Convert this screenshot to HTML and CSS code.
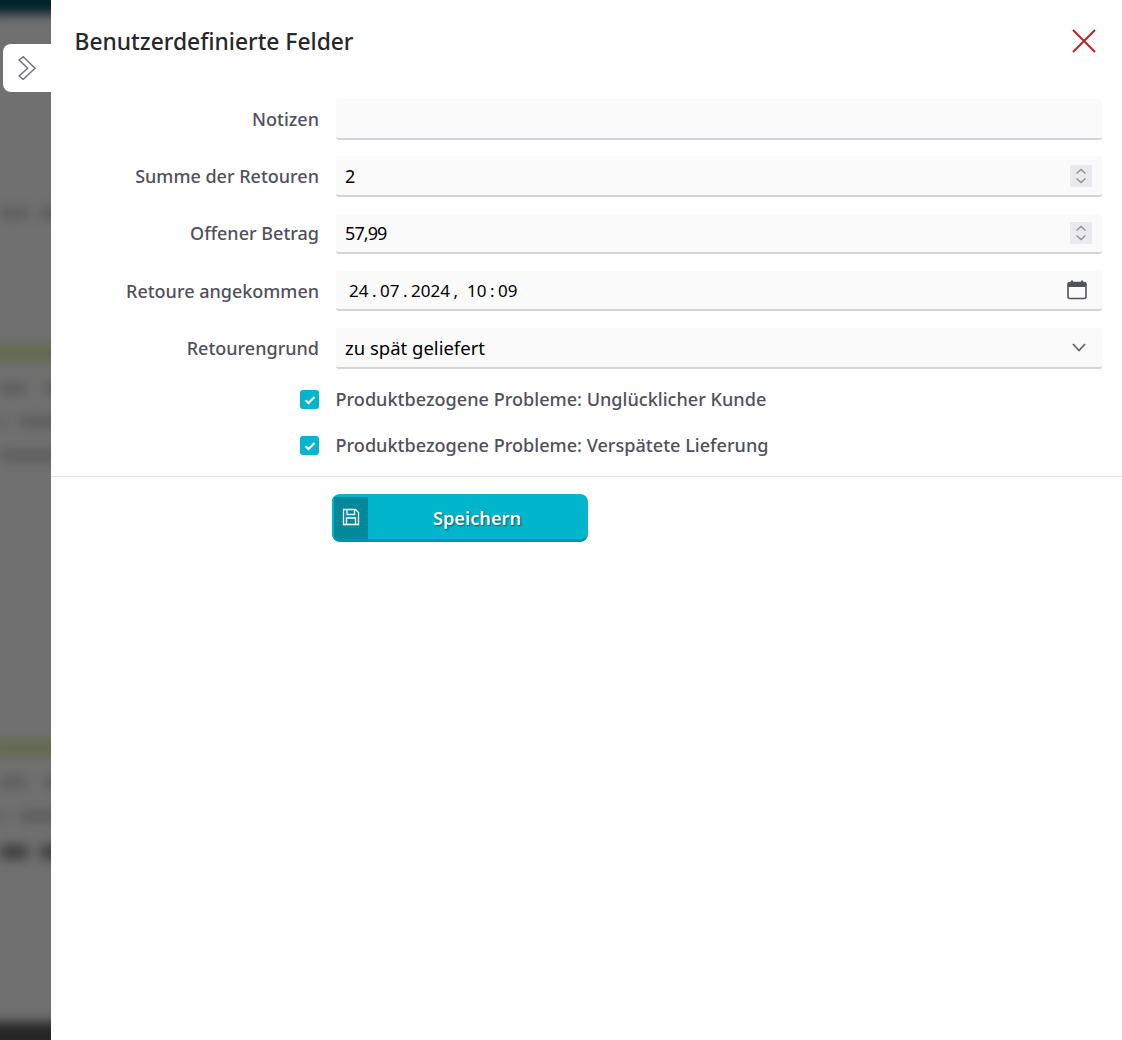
FILE: index.html
```html
<!DOCTYPE html>
<html lang="de">
<head>
<meta charset="utf-8">
<title>Benutzerdefinierte Felder</title>
<link rel="stylesheet" href="styles.css">
</head>
<body>
<div class="page">
  <div class="backdrop" aria-hidden="true">
    <div class="blur">
      <div class="bar-top"></div>
      <div class="line l213"><i class="w28"></i><i class="w30"></i></div>
      <div class="green g352"></div>
      <div class="line l388"><i class="w28"></i><i class="w30"></i></div>
      <div class="line l421"><i class="w6"></i><i class="w50"></i></div>
      <div class="line l455"><i class="w60"></i></div>
      <div class="green g748"></div>
      <div class="line l782"><i class="w28"></i><i class="w30"></i></div>
      <div class="line l815"><i class="w6"></i><i class="w50"></i></div>
      <div class="line l850 dark"><i class="w28"></i><i class="w30"></i></div>
      <div class="spacer"></div>
      <div class="bar-bottom"></div>
    </div>
  </div>
  <button class="tab" type="button" aria-label="Einklappen">
    <svg width="18" height="24" viewBox="0 0 18 24"><path d="M1 4 5.300 0.800 17 12.300 5.300 23.300 1 20 9.700 12.300Z" fill="none" stroke="#71717f" stroke-width="1.500" stroke-linejoin="round"/></svg>
  </button>
  <main class="panel">
    <header class="head">
      <h1>Benutzerdefinierte Felder</h1>
      <button class="close" type="button" aria-label="Schließen">
        <svg width="24" height="24" viewBox="0 0 24 24"><path d="M1 1 23 23M23 1 1 23" stroke="#c02126" stroke-width="2" fill="none"/></svg>
      </button>
    </header>
    <form class="form">
      <div class="label">Notizen</div>
      <div class="field"></div>

      <div class="label">Summe der Retouren</div>
      <div class="field"><span>2</span>
        <span class="spin"><svg width="12" height="18" viewBox="0 0 12 18"><path d="M1.500 6.500 6 2.500l4.500 4M1.500 11.500l4.500 4 4.500-4" fill="none" stroke="#8f8f9d" stroke-width="1.400"/></svg></span>
      </div>

      <div class="label">Offener Betrag</div>
      <div class="field"><span class="num">57,99</span>
        <span class="spin"><svg width="12" height="18" viewBox="0 0 12 18"><path d="M1.500 6.500 6 2.500l4.500 4M1.500 11.500l4.500 4 4.500-4" fill="none" stroke="#8f8f9d" stroke-width="1.400"/></svg></span>
      </div>

      <div class="label">Retoure angekommen</div>
      <div class="field date">
        <span class="dt"><span>24</span><span>.</span><span>07</span><span>.</span><span>2024</span><span>,</span><span class="hh">10</span><span>:</span><span>09</span></span>
        <svg class="cal" width="20" height="20" viewBox="0 0 20 20"><path d="M5 0.500v3M15 0.500v3" stroke="#52525b" stroke-width="2" fill="none"/><rect x="1" y="2.500" width="18" height="16" rx="2" fill="none" stroke="#52525b" stroke-width="1.600"/><path d="M1 3.500a1.500 1.500 0 0 1 1.500-1.500h15a1.500 1.500 0 0 1 1.500 1.500V7H1Z" fill="#52525b"/></svg>
      </div>

      <div class="label">Retourengrund</div>
      <div class="field select"><span>zu spät geliefert</span>
        <svg class="chev" width="14" height="9" viewBox="0 0 14 9"><path d="M1 1 7 7.500 13 1" fill="none" stroke="#63636f" stroke-width="1.800"/></svg>
      </div>

      <label class="check"><span class="box"><svg width="12" height="10" viewBox="0 0 12 10"><path d="M1.500 5.200 4.500 8 10.500 2" fill="none" stroke="#fff" stroke-width="2.200"/></svg></span></label>
      <div class="check-text">Produktbezogene Probleme: Unglücklicher Kunde</div>

      <label class="check"><span class="box"><svg width="12" height="10" viewBox="0 0 12 10"><path d="M1.500 5.200 4.500 8 10.500 2" fill="none" stroke="#fff" stroke-width="2.200"/></svg></span></label>
      <div class="check-text">Produktbezogene Probleme: Verspätete Lieferung</div>
    </form>
    <hr class="rule">
    <div class="actions">
      <button class="save" type="button">
        <span class="save-icon"><svg width="18" height="18" viewBox="0 0 18 18" fill="none" stroke="#fff" stroke-width="1.300"><path d="M1.500 1.500h12l3 3v12h-15Z"/><path d="M5 1.500v5h7.500v-5M4.500 16.500v-6.500h9v6.500"/></svg></span>
        <span class="save-text">Speichern</span>
      </button>
    </div>
  </main>
</div>
</body>
</html>
```
FILE: styles.css
```css
* { box-sizing: border-box; }
html, body { margin: 0; height: 100%; overflow: hidden; background: #fff; }
body { font-family: "Noto Sans", "Open Sans", sans-serif; }

.page { display: flex; height: 1040px; width: 1122px; position: relative; overflow: hidden; }

.backdrop { width: 51px; height: 1040px; flex: none; overflow: hidden; background: #707070; }
.blur { display: flex; flex-direction: column; height: 1040px; filter: blur(6px); margin: 0 -12px; width: 84px; }
.bar-top { height: 26px; margin-top: -12px; flex: none; background: #00222a; }
.bar-bottom { height: 30px; flex: none; background: #262626; margin-bottom: -12px; }
.spacer { flex: 1; }
.line { display: flex; height: 9px; flex: none; margin-left: 12px; }
.line i { display: block; height: 100%; background: #585858; }
.line.dark { height: 14px; }
.line.dark i { background: #3e3e3e; }
.w6 { width: 6px; } .w28 { width: 28px; } .w30 { width: 30px; } .w50 { width: 50px; } .w60 { width: 60px; }
.green { height: 14px; flex: none; background: #626a4a; }
.l213 { margin-top: 194.500px; gap: 12px; }
.g352 { margin-top: 128.500px; }
.l388 { margin-top: 23.500px; gap: 19px; }
.l421 { margin-top: 24.500px; gap: 14px; }
.l455 { margin-top: 24.500px; }
.g748 { margin-top: 281.500px; }
.l782 { margin-top: 22.500px; gap: 19px; }
.l815 { margin-top: 25.500px; gap: 14px; }
.l850 { margin-top: 24px; gap: 12px; }

.tab { position: absolute; left: 3px; top: 44px; width: 48px; height: 48px; padding: 0 0 0 15px; border: 0; background: #fff; border-radius: 8px 0 0 8px; display: flex; align-items: center; }

.panel { flex: 1; background: #fff; display: flex; flex-direction: column; }
.head { display: flex; justify-content: space-between; align-items: center; height: 82px; padding: 0 25px 0 24px; }
h1 { margin: 0 0 0 -0.500px; font-size: 22.800px; font-weight: 500; color: #27272a; }
.close { width: 26px; height: 26px; padding: 1px; border: 0; background: none; display: flex; }

.form { display: grid; grid-template-columns: 268px 766px; column-gap: 17px; row-gap: 16.750px; padding-top: 17px; align-items: center; align-content: start; }
.label { text-align: right; font-size: 18px; font-weight: 500; color: #50505c; line-height: 24px; white-space: nowrap; margin-top: -1px; }
.field { height: 40.500px; padding: 0.500px 10px 0 9px; background: #fafafa; border-bottom: 2px solid #d4d4d8; border-radius: 3px; display: flex; align-items: center; justify-content: space-between; font-size: 18px; color: #000; }
.spin { width: 22px; height: 22px; background: #e9e9ee; display: flex; align-items: center; justify-content: center; }
.num { letter-spacing: -0.900px; }
.date { padding: 0.500px 15px 0 13px; }
.dt { display: flex; gap: 3.500px; font-size: 17px; }
.hh { margin-left: 5.500px; }
.select { padding-right: 16px; }
.select > span { font-size: 18.500px; margin-top: -1px; }

.check { justify-self: end; display: flex; }
.check-text { font-size: 18.100px; font-weight: 500; color: #50505c; line-height: 29.250px; white-space: nowrap; margin-left: -0.500px; }
.box { width: 19px; height: 19px; background: #00b5cc; border-radius: 3px; display: flex; align-items: center; justify-content: center; }

.rule { border: 0; border-top: 1px solid #e0e0e0; margin: 15.500px 0 0; width: 100%; }
.actions { padding: 17px 0 0 281px; }
.save { width: 256px; height: 48px; padding: 0; border: 0; border-radius: 8px; background: #00b5cc; border-bottom: 3px solid #0093a5; display: flex; align-items: stretch; font-family: inherit; overflow: hidden; }
.save-icon { width: 36px; margin: 3px 0 0 0; border-left: 2px solid #00b5cc; background: #00899a; display: flex; align-items: center; justify-content: center; padding-bottom: 3px; }
.save-text { flex: 1; text-align: center; color: #fff; font-size: 18.200px; font-weight: 600; line-height: 48px; padding-right: 2px; text-shadow: 1px 1px 2px rgba(0,0,0,.5); }
```
